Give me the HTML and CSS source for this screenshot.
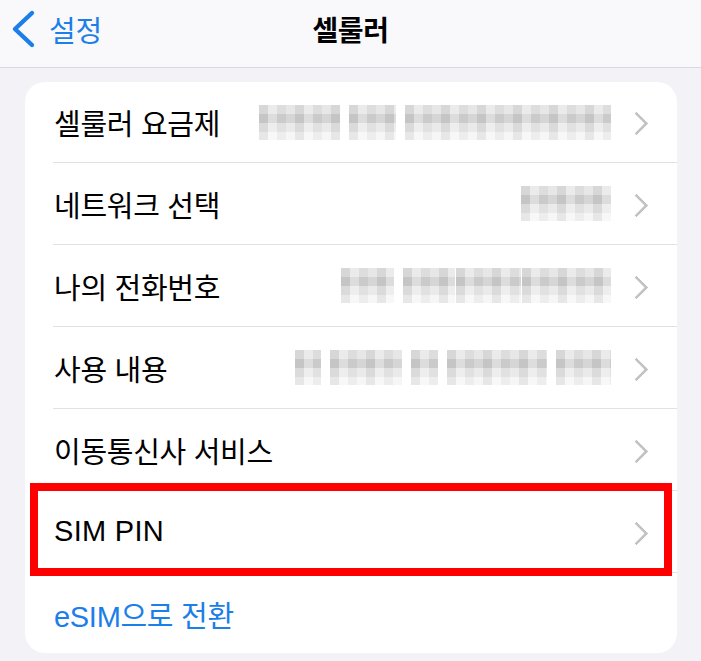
FILE: index.html
```html
<!DOCTYPE html>
<html lang="ko">
<head>
<meta charset="utf-8">
<title>셀룰러</title>
<link rel="stylesheet" href="styles.css">
</head>
<body>
<header class="nav">
  <div class="back">
    <svg class="back-icon" width="26" height="40" viewBox="0 0 26 40"><path d="M22 4 L5 20 L22 36" fill="none" stroke="#1b7ee9" stroke-width="4.4" stroke-linecap="round" stroke-linejoin="round"/></svg>
    <span class="back-label">설정</span>
  </div>
  <h1 class="title">셀룰러</h1>
</header>
<main class="content">
  <section class="card">
    <div class="row">
      <div class="row-inner">
        <span class="label">셀룰러 요금제</span>
        <span class="value">
          <span class="mosaic w81"></span><span class="mosaic w47"></span><span class="mosaic w206"></span>
        </span>
        <span class="chev"></span>
      </div>
    </div>
    <div class="row">
      <div class="row-inner">
        <span class="label">네트워크 선택</span>
        <span class="value"><span class="mosaic w90"></span></span>
        <span class="chev"></span>
      </div>
    </div>
    <div class="row">
      <div class="row-inner">
        <span class="label">나의 전화번호</span>
        <span class="value">
          <span class="mosaic w53"></span><span class="mosaic w52"></span><span class="mosaic w65 tight"></span><span class="mosaic w89 tight"></span>
        </span>
        <span class="chev"></span>
      </div>
    </div>
    <div class="row">
      <div class="row-inner">
        <span class="label">사용 내용</span>
        <span class="value">
          <span class="mosaic w26"></span><span class="mosaic w72"></span><span class="mosaic w27"></span><span class="mosaic w100"></span><span class="mosaic w55"></span>
        </span>
        <span class="chev"></span>
      </div>
    </div>
    <div class="row">
      <div class="row-inner">
        <span class="label">이동통신사 서비스</span>
        <span class="chev"></span>
      </div>
    </div>
    <div class="row highlighted">
      <div class="row-inner">
        <span class="label latin">SIM PIN</span>
        <span class="chev"></span>
      </div>
      <div class="redbox"></div>
    </div>
    <div class="row last">
      <div class="row-inner">
        <span class="label link">eSIM으로 전환</span>
      </div>
    </div>
  </section>
</main>
</body>
</html>
```

FILE: styles.css
```css
* { box-sizing: border-box; }
html, body { margin: 0; padding: 0; }
body {
  width: 701px;
  height: 661px;
  overflow: hidden;
  background: #f2f2f7;
  font-family: "Liberation Sans", "Noto Sans CJK KR", sans-serif;
  color: #000;
}
.nav {
  height: 68px;
  background: #f9f9fb;
  border-bottom: 1px solid #d9d9dd;
  display: flex;
  align-items: center;
  justify-content: center;
  position: relative;
}
.back {
  position: absolute;
  left: 10px;
  top: 9px;
  display: flex;
  align-items: center;
  gap: 13px;
  color: #1b7ee9;
}
.back-icon { display: block; }
.back-label {
  font-family: "Noto Sans CJK KR", sans-serif;
  font-size: 29px;
  line-height: 40px;
  letter-spacing: -0.3px;
}
.title {
  margin: 0;
  font-family: "Noto Sans CJK KR", sans-serif;
  font-weight: 700;
  font-size: 28px;
  line-height: 40px;
  margin-top: -10px;
  letter-spacing: -0.5px;
}
.content {
  padding: 14px 24px 0 25px;
}
.card {
  background: #fff;
  border-radius: 20px;
  height: 571px;
}
.row {
  height: 82px;
  position: relative;
}
.row:first-child { height: 81px; }
.row-inner {
  margin-left: 28px;
  height: 100%;
  border-bottom: 1px solid #e2e2e5;
  display: flex;
  align-items: center;
  padding-right: 30px;
}
.row.last .row-inner { border-bottom: none; }
.label {
  font-family: "Liberation Sans", "Noto Sans CJK KR", sans-serif;
  font-size: 29px;
  letter-spacing: -0.3px;
  flex: 1;
  white-space: nowrap;
  padding-left: 1px;
}
.label.latin { letter-spacing: 0.3px; }
.label.link { color: #1b7ee9; }
.value {
  display: flex;
  gap: 9px;
  margin-right: 22px;
}
.mosaic {
  display: block;
  height: 35px;
  background:
    repeating-linear-gradient(90deg, rgba(0,0,0,0.06) 0 9px, rgba(255,255,255,0.25) 9px 18px, rgba(0,0,0,0.03) 18px 27px, rgba(255,255,255,0.1) 27px 36px),
    linear-gradient(to bottom, #e4e4e4 0 26%, #d1d1d1 26% 52%, #e8e8e8 52% 76%, #f5f5f5 76% 100%);
}
.mosaic.tight { margin-left: -8px; }
.w26 { width: 26px; }
.w27 { width: 27px; }
.w47 { width: 47px; }
.w52 { width: 52px; }
.w53 { width: 53px; }
.w55 { width: 55px; }
.w65 { width: 65px; }
.w72 { width: 72px; }
.w81 { width: 81px; }
.w89 { width: 89px; }
.w90 { width: 90px; }
.w100 { width: 100px; }
.w206 { width: 206px; }
.chev {
  width: 14px;
  height: 22px;
  position: relative;
  flex: none;
}
.chev::before {
  content: "";
  position: absolute;
  width: 14px;
  height: 14px;
  border-top: 3px solid #c2c2c5;
  border-right: 3px solid #c2c2c5;
  border-radius: 1px;
  transform: rotate(45deg);
  left: -5px;
  top: 4px;
}
.redbox {
  position: absolute;
  left: 5px;
  right: 5px;
  top: -8px;
  bottom: -3px;
  border: 8px solid #ff0000;
  pointer-events: none;
}
```
